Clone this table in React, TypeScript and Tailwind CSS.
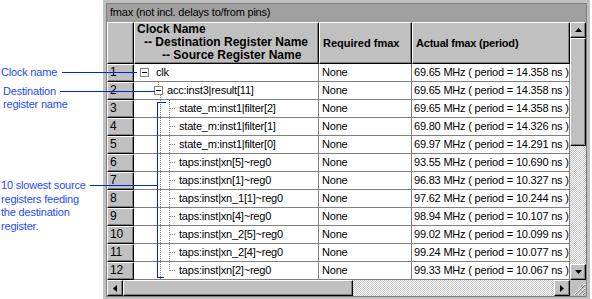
import React from 'react';

type Row = { n: number; level: number; name: string; act: string; last?: boolean };

const rows: Row[] = [
	{ n: 1, level: 0, name: 'clk', act: '69.65 MHz ( period = 14.358 ns )' },
	{ n: 2, level: 1, name: 'acc:inst3|result[11]', act: '69.65 MHz ( period = 14.358 ns )' },
	{ n: 3, level: 2, name: 'state_m:inst1|filter[2]', act: '69.65 MHz ( period = 14.358 ns )' },
	{ n: 4, level: 2, name: 'state_m:inst1|filter[1]', act: '69.80 MHz ( period = 14.326 ns )' },
	{ n: 5, level: 2, name: 'state_m:inst1|filter[0]', act: '69.97 MHz ( period = 14.291 ns )' },
	{ n: 6, level: 2, name: 'taps:inst|xn[5]~reg0', act: '93.55 MHz ( period = 10.690 ns )' },
	{ n: 7, level: 2, name: 'taps:inst|xn[1]~reg0', act: '96.83 MHz ( period = 10.327 ns )' },
	{ n: 8, level: 2, name: 'taps:inst|xn_1[1]~reg0', act: '97.62 MHz ( period = 10.244 ns )' },
	{ n: 9, level: 2, name: 'taps:inst|xn[4]~reg0', act: '98.94 MHz ( period = 10.107 ns )' },
	{ n: 10, level: 2, name: 'taps:inst|xn_2[5]~reg0', act: '99.02 MHz ( period = 10.099 ns )' },
	{ n: 11, level: 2, name: 'taps:inst|xn_2[4]~reg0', act: '99.24 MHz ( period = 10.077 ns )' },
	{ n: 12, level: 2, name: 'taps:inst|xn[2]~reg0', act: '99.33 MHz ( period = 10.067 ns )', last: true },
];

const bevel =
	'border border-t-white border-l-white border-r-black border-b-black shadow-[inset_-1px_-1px_0_#808080] bg-[#c0c0c0]';

const Dotted = ({ x1, y1, x2, y2 }: { x1: number; y1: number; x2: number; y2: number }) => (
	<line x1={x1} y1={y1} x2={x2} y2={y2} stroke="#808080" strokeWidth="1" strokeDasharray="1 1" shapeRendering="crispEdges" />
);

const MinusBox = ({ x }: { x: number }) => (
	<>
		<rect x={x + 0.5} y={4.5} width={8} height={8} fill="white" stroke="#808080" shapeRendering="crispEdges" />
		<line x1={x + 2} y1={8.5} x2={x + 7} y2={8.5} stroke="black" shapeRendering="crispEdges" />
	</>
);

const TreeGlyph = ({ level, last }: { level: number; last?: boolean }) => {
	if (level === 0) {
		return (
			<svg width="22" height="17" className="shrink-0">
				<MinusBox x={6} />
			</svg>
		);
	}
	if (level === 1) {
		return (
			<svg width="33" height="17" className="shrink-0">
				<Dotted x1={24.5} y1={0} x2={24.5} y2={4} />
				<MinusBox x={20} />
				<Dotted x1={26.5} y1={13} x2={26.5} y2={17} />
			</svg>
		);
	}
	return (
		<svg width="45" height="17" className="shrink-0">
			<Dotted x1={26.5} y1={0} x2={26.5} y2={17} />
			<Dotted x1={35.5} y1={0} x2={35.5} y2={last ? 9 : 17} />
			<Dotted x1={36} y1={8.5} x2={42} y2={8.5} />
		</svg>
	);
};

const Tri = ({ dir }: { dir: 'up' | 'down' | 'left' | 'right' }) => {
	const pts = {
		up: '0,4 7,4 3.5,0',
		down: '0,0 7,0 3.5,4',
		left: '4,0 4,7 0,3.5',
		right: '0,0 0,7 4,3.5',
	}[dir];
	const w = dir === 'up' || dir === 'down' ? 7 : 4;
	const h = dir === 'up' || dir === 'down' ? 4 : 7;
	return (
		<svg width={w} height={h}>
			<polygon points={pts} fill="black" />
		</svg>
	);
};

const track = 'bg-[repeating-conic-gradient(#c0c0c0_0%_25%,#ffffff_0%_50%)] bg-[length:2px_2px]';

export default function App() {
	return (
		<div className="relative w-[592px] h-[299px] bg-white flex font-['Liberation_Sans',Arial,sans-serif] text-[11px] tracking-[-0.2px] text-black overflow-hidden">
			{/* annotations */}
			<div className="w-[103px] shrink-0 flex flex-col text-[#1f4aff] leading-[13px] pt-[66px]">
				<div className="pl-[1px]">Clock name</div>
				<div className="pl-[3px] mt-[6px]">Destination</div>
				<div className="pl-[3px]">register name</div>
				<div className="pl-[1px] mt-[68px] leading-[13.5px]">
					<div>10 slowest source</div>
					<div>registers feeding</div>
					<div>the destination</div>
					<div>register.</div>
				</div>
			</div>

			{/* window frame */}
			<div className="w-[487px] h-[299px] bg-[#c0c0c0] pt-[3px] px-[3px] pb-[2px]">
				<div className="border border-[#808080] flex flex-col h-full">
					<div className="h-[18px] bg-[#a0a0a0] pl-[3px] leading-[17px] whitespace-nowrap">
						fmax (not incl. delays to/from pins)
					</div>
					<div className="flex h-[258px]">
						<div className="w-[463px] flex flex-col bg-white">
							<div className="flex h-[42px] font-bold">
								<div className={`w-[27px] shrink-0 ${bevel}`} />
								<div className={`w-[185px] shrink-0 ${bevel} pl-[2px] text-[12px] tracking-normal leading-[13px] whitespace-nowrap`}>
									<div>Clock Name</div>
									<div className="pl-[7px]">-- Destination Register Name</div>
									<div className="pl-[25px]">-- Source Register Name</div>
								</div>
								<div className={`w-[93px] shrink-0 ${bevel} pl-[3px] tracking-normal flex items-center whitespace-nowrap`}>
									Required fmax
								</div>
								<div className={`w-[158px] shrink-0 ${bevel} pl-[3px] flex items-center whitespace-nowrap`}>
									Actual fmax (period)
								</div>
							</div>
							{rows.map((r) => (
								<div key={r.n} className="flex h-[18px] leading-[17px] whitespace-nowrap">
									<div className={`w-[27px] shrink-0 ${bevel} pl-[2px] text-[12px] leading-[15px]`}>{r.n}</div>
									<div className="w-[185px] shrink-0 border-r border-b border-[#808080] flex overflow-hidden">
										<TreeGlyph level={r.level} last={r.last} />
										<span>{r.name}</span>
									</div>
									<div className="w-[93px] shrink-0 border-r border-b border-[#808080] pl-[3px]">None</div>
									<div className="w-[158px] shrink-0 border-r border-b border-[#808080] pl-[2px] overflow-hidden">
										{r.act}
									</div>
								</div>
							))}
						</div>
						<div className="w-[16px] flex flex-col">
							<div className={`h-[16px] ${bevel} flex items-center justify-center`}>
								<Tri dir="up" />
							</div>
							<div className={`h-[108px] ${bevel}`} />
							<div className={`flex-1 ${track}`} />
							<div className={`h-[16px] ${bevel} flex items-center justify-center`}>
								<Tri dir="down" />
							</div>
						</div>
					</div>
					<div className="flex h-[16px]">
						<div className="w-[463px] flex">
							<div className={`w-[16px] ${bevel} flex items-center justify-center`}>
								<Tri dir="left" />
							</div>
							<div className={`w-[230px] ${bevel}`} />
							<div className={`flex-1 ${track}`} />
							<div className={`w-[16px] ${bevel} flex items-center justify-center`}>
								<Tri dir="right" />
							</div>
						</div>
						<div className="w-[16px] bg-[#c0c0c0] flex items-end justify-end">
							<svg width="12" height="12">
								<line x1="11" y1="0" x2="0" y2="11" stroke="white" />
								<line x1="11" y1="1" x2="1" y2="11" stroke="#808080" />
								<line x1="11" y1="4" x2="4" y2="11" stroke="white" />
								<line x1="11" y1="5" x2="5" y2="11" stroke="#808080" />
								<line x1="11" y1="8" x2="8" y2="11" stroke="white" />
								<line x1="11" y1="9" x2="9" y2="11" stroke="#808080" />
							</svg>
						</div>
					</div>
				</div>
			</div>

			{/* callout lines */}
			<div className="absolute left-[62px] top-[72px] w-[75px] h-px bg-[#0024e0]" />
			<div className="absolute left-[60px] top-[91px] w-[95px] h-px bg-[#0024e0]" />
			<div className="absolute left-[90px] top-[185px] w-[67px] h-px bg-[#0024e0]" />
			<div className="absolute left-[157px] top-[102px] w-px h-[176px] bg-[#0024e0]" />
			<div className="absolute left-[157px] top-[102px] w-[9px] h-px bg-[#0024e0]" />
			<div className="absolute left-[157px] top-[277px] w-[7px] h-px bg-[#0024e0]" />
		</div>
	);
}
